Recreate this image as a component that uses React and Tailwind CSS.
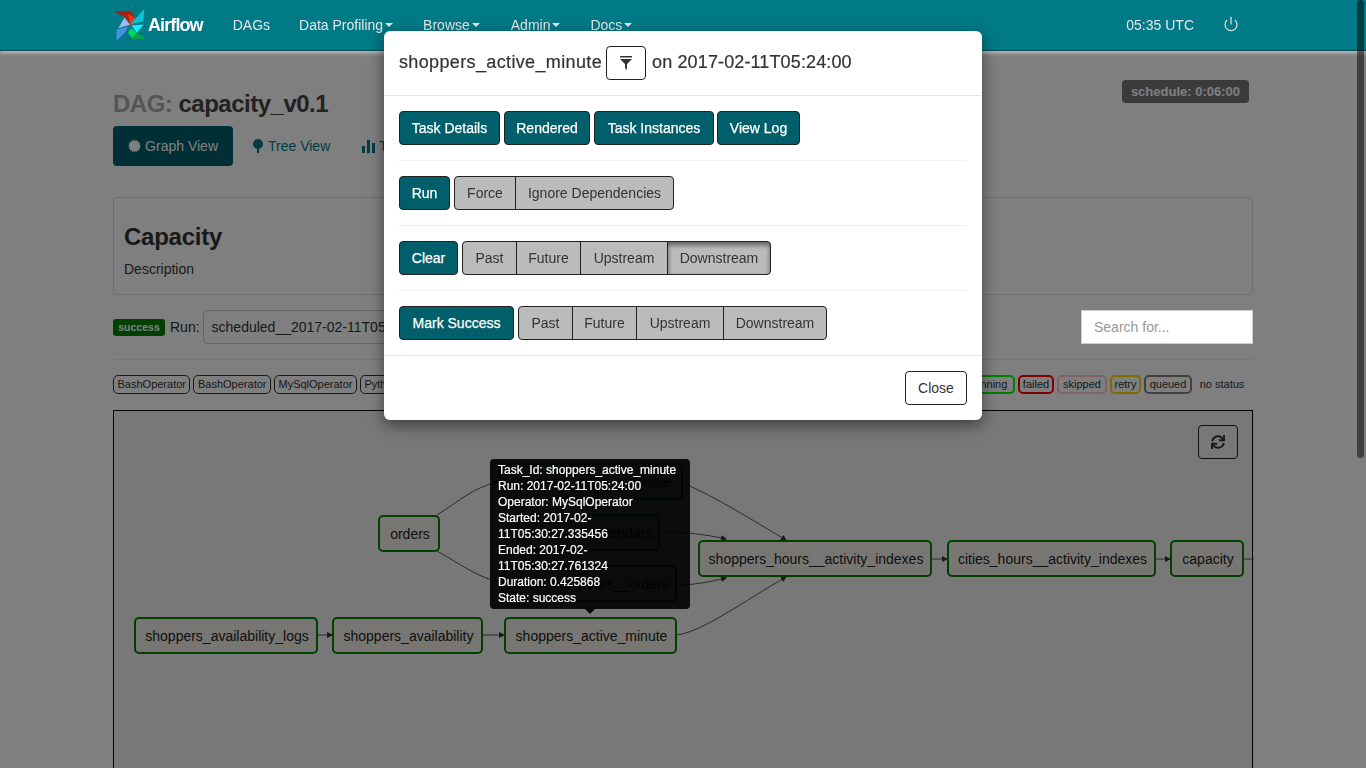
import React from 'react';
import { FaSync } from 'react-icons/fa';
import { Power } from 'lucide-react';

const Caret = () => (
  <span className="inline-block w-0 h-0 ml-[2px] align-middle border-x-[4px] border-x-transparent border-t-[4px] border-t-[#e6e6e6]"></span>
);

// pinwheel logo
const Logo = () => (
  <svg viewBox="340 28 100 97" className="w-[33px] h-[32px]">
    <polygon points="342,35 392,33 410,58 392,76 375,52" fill="#a8200d" />
    <polygon points="385,42 415,60 405,74 392,76" fill="#e43921" />
    <polygon points="375,54 392,76 356,86" fill="#9db8f2" />
    <polygon points="351,90 386,82 376,100 350,125" fill="#4a90e2" />
    <polygon points="435,28 394,73 432,66" fill="#00c7d4" />
    <polygon points="396,78 433,75 412,100" fill="#11f0ff" />
    <polygon points="394,86 412,100 400,118 385,100" fill="#04d659" />
    <polygon points="410,100 440,118 398,119" fill="#00a84a" />
  </svg>
);

// sunburst, glyphicon-certificate
const certPoints = Array.from({ length: 32 }, (_, i) => {
  const r = i % 2 === 0 ? 7 : 5.4;
  const a = (i / 32) * Math.PI * 2;
  return `${(7 + r * Math.cos(a)).toFixed(2)},${(7 + r * Math.sin(a)).toFixed(2)}`;
}).join(' ');

const navLinks = [
  { label: 'DAGs', className: 'ml-[30px]' },
  { label: 'Data Profiling', caret: true, className: 'ml-[29px]' },
  { label: 'Browse', caret: true, className: 'ml-[30px]' },
  { label: 'Admin', caret: true, className: 'ml-[31px]' },
  { label: 'Docs', caret: true, className: 'ml-[30px]' },
];

const operators = ['BashOperator', 'BashOperator', 'MySqlOperator', 'PythonOperator'];

const states = [
  { label: 'success', className: 'w-[52px] border-[#008000]' },
  { label: 'running', className: 'w-[52px] border-[#00ff00]' },
  { label: 'failed', className: 'w-[36px] border-[#ff0000]' },
  { label: 'skipped', className: 'w-[50px] border-[#ffc0cb]' },
  { label: 'retry', className: 'w-[31px] border-[#ffd700]' },
  { label: 'queued', className: 'w-[48px] border-[#808080]' },
  { label: 'no status', className: 'w-[54px] -mr-[4px] border-transparent' },
];

const nodes = [
  { label: 'orders', className: 'left-[264px] top-[104px] w-[62px]' },
  { label: 'shoppers_hours__minute', className: 'left-[384px] top-[52px] w-[185px]' },
  { label: 'shoppers_calendars', className: 'left-[403px] top-[103px] w-[143px]' },
  { label: 'shoppers_hours__orders', className: 'left-[389px] top-[154px] w-[174px]' },
  { label: 'shoppers_hours__activity_indexes', className: 'left-[584px] top-[129px] w-[234px]' },
  { label: 'cities_hours__activity_indexes', className: 'left-[833px] top-[129px] w-[209px]' },
  { label: 'capacity', className: 'left-[1056px] top-[129px] w-[74px]' },
  { label: 'shoppers_availability_logs', className: 'left-[20px] top-[206px] w-[184px]' },
  { label: 'shoppers_availability', className: 'left-[218px] top-[206px] w-[151px]' },
  { label: 'shoppers_active_minute', className: 'left-[390px] top-[206px] w-[173px]' },
];

const edges = [
  'M204 224 L218 224',
  'M369 224 L390 224',
  'M323 104 C345 90 360 76 384 71',
  'M323 140 C345 152 365 168 390 172',
  'M569 72 C600 85 640 110 672 129',
  'M546 121 C570 121 590 123 612 128',
  'M563 174 C580 174 595 171 612 167',
  'M563 224 C590 220 630 190 672 166',
  'M818 148 L833 148',
  'M1042 148 L1056 148',
];

const tooltipLines = [
  'Task_Id: shoppers_active_minute',
  'Run: 2017-02-11T05:24:00',
  'Operator: MySqlOperator',
  'Started: 2017-02-',
  '11T05:30:27.335456',
  'Ended: 2017-02-',
  '11T05:30:27.761324',
  'Duration: 0.425868',
  'State: success',
];

const TealButton = ({ children, className = '' }) => (
  <button className={`h-[34px] bg-[#005f6b] border border-[#222] rounded-[4px] text-white text-[14px] whitespace-nowrap [-webkit-text-stroke:0.25px_white] ${className}`}>
    {children}
  </button>
);

const GroupButtons = ({ items }) => (
  <div className="flex h-[34px] border border-[#222] rounded-[4px] overflow-hidden bg-[#bbbbbb]">
    {items.map((item, i) => (
      <div
        key={item.label}
        className={`flex items-center justify-center text-[14px] text-[#333] whitespace-nowrap ${item.width} ${i > 0 ? 'border-l border-[#222]' : ''} ${item.active ? 'shadow-[inset_0_3px_5px_rgba(0,0,0,0.5)]' : ''}`}
      >
        {item.label}
      </div>
    ))}
  </div>
);

const App = () => {
  return (
    <div className="relative h-screen overflow-hidden bg-white font-['Liberation_Sans',Arial,sans-serif] text-[14px] text-[#333]">
      {/* top bar */}
      <nav className="relative z-50 h-[51px] bg-[#007a87] border-b border-[#004a55] shadow-[0_2px_4px_rgba(255,255,255,0.5)]">
        <div className="w-[1140px] mx-auto flex items-center h-[50px] text-[#e6e6e6]">
          <Logo />
          <span className="ml-[2px] text-[18px] font-bold tracking-[-0.9px] text-white">Airflow</span>
          {navLinks.map((link) => (
            <a key={link.label} className={`${link.className} flex items-center whitespace-nowrap`}>
              {link.label}
              {link.caret && <Caret />}
            </a>
          ))}
          <span className="ml-auto">05:35 UTC</span>
          <Power size={16} strokeWidth={1.8} className="ml-[29px] mr-[14px] -mt-[3px]" />
        </div>
      </nav>

      <main className="w-[1140px] mx-auto">
        <div className="flex justify-between items-start h-[75px] pt-[29px]">
          <h4 className="text-[24px] leading-[48px] font-bold tracking-[-0.5px] text-[#444]">
            <span className="text-[#aaa]">DAG:</span> capacity_v0.1
          </h4>
          <span className="mr-[4px] h-[23px] px-[9px] flex items-center rounded-[4px] bg-[#777] text-white text-[13px] font-bold">
            schedule: 0:06:00
          </span>
        </div>

        <div className="flex items-center h-[40px] text-[#007a87] whitespace-nowrap">
          <a className="flex items-center h-[40px] w-[120px] px-[15px] rounded-[4px] bg-[#005f6b] text-white">
            <svg viewBox="0 0 14 14" className="w-[14px] h-[14px] mr-[4px] fill-current">
              <polygon points={certPoints} />
            </svg>
            Graph View
          </a>
          <a className="flex items-center h-[40px] ml-[4px] px-[15px]">
            <svg viewBox="0 0 12 14" className="w-[12px] h-[14px] mr-[4px] fill-current">
              <circle cx="6" cy="5" r="5" />
              <rect x="5" y="8" width="2" height="6" />
            </svg>
            Tree View
          </a>
          <a className="flex items-center h-[40px] ml-[2px] px-[15px]">
            <svg viewBox="0 0 13 14" className="w-[13px] h-[14px] mr-[4px] fill-current">
              <rect x="0" y="7" width="3" height="7" />
              <rect x="5" y="1" width="3" height="13" />
              <rect x="10" y="4" width="3" height="10" />
            </svg>
            Task Duration
          </a>
        </div>

        <section className="mt-[31px] h-[98px] border border-[#ddd] rounded-[4px] px-[10px]">
          <h2 className="mt-[24px] text-[24px] leading-[30px] font-bold tracking-[-0.25px]">Capacity</h2>
          <p className="mt-[7px] leading-[20px]">Description</p>
        </section>

        <div className="flex items-center mt-[15px] h-[34px]">
          <span className="w-[52px] h-[17px] mt-[1px] flex items-center justify-center rounded-[3px] bg-[#008000] text-white text-[10.5px] font-bold">success</span>
          <span className="ml-[5px]">Run:</span>
          <div className="ml-[3px] w-[330px] h-[34px] px-[8px] flex items-center border border-[#ccc] rounded-[4px] whitespace-nowrap">
            scheduled__2017-02-11T05:24:00
          </div>
          <div className="relative z-50 ml-auto w-[172px] h-[34px] px-[12px] flex items-center bg-white border border-[#ccc] text-[#999]">
            Search for...
          </div>
        </div>

        <div className="mt-[15px] border-t border-[#eee]"></div>

        <div className="flex justify-between mt-[15px] h-[20px] text-[11px]">
          <div className="flex gap-[3px]">
            {operators.map((op, i) => (
              <span key={i} className="h-[19px] px-[3.5px] flex items-center border border-[#333] rounded-[5px]">{op}</span>
            ))}
          </div>
          <div className="flex gap-[3px] mr-[8px]">
            {states.map((s) => (
              <span
                key={s.label}
                className={`h-[19px] flex items-center justify-center whitespace-nowrap border-2 rounded-[5px] ${s.className}`}
              >
                {s.label}
              </span>
            ))}
          </div>
        </div>

        <div className="relative mt-[15px] h-[600px] border border-black bg-[#f0f0f0]">
          <button className="absolute left-[1084px] top-[14px] w-[40px] h-[34px] flex items-center justify-center border border-[#222] rounded-[4px]">
            <FaSync size={14} />
          </button>
          <svg className="absolute left-0 top-0 w-[1140px] h-[300px]" fill="none" stroke="#555" strokeWidth="1">
            <defs>
              <marker id="arrow" markerWidth="6" markerHeight="6" refX="5" refY="3" orient="auto">
                <path d="M0 0 L6 3 L0 6 Z" fill="#333" stroke="none" />
              </marker>
            </defs>
            {edges.map((d) => (
              <path key={d} d={d} markerEnd="url(#arrow)" />
            ))}
            <path d="M1130 148 L1140 148" />
          </svg>
          {nodes.map((node) => (
            <div
              key={node.label}
              className={`absolute h-[37px] pt-[2px] pl-[2px] flex items-center justify-center border-2 border-[#008000] rounded-[5px] bg-[#f0ede4] text-[#222] whitespace-nowrap ${node.className}`}
            >
              {node.label}
            </div>
          ))}

          {/* hover tooltip for the selected task */}
          <div className="absolute z-50 left-[376px] top-[48px] w-[200px] h-[150px] px-[8px] py-[3px] rounded-[4px] bg-black/90 text-white text-[12px] leading-[16px] [-webkit-text-stroke:0.2px_white]">
            {tooltipLines.map((line) => (
              <div key={line}>{line}</div>
            ))}
            <span className="absolute left-[95px] top-[150px] w-0 h-0 border-x-[5px] border-x-transparent border-t-[5px] border-t-black/90"></span>
          </div>
        </div>
      </main>

      {/* backdrop */}
      <div className="fixed inset-0 z-40 bg-black/50"></div>

      {/* task instance modal */}
      <div className="absolute z-50 left-[384px] top-[31px] w-[598px] h-[389px] bg-white rounded-[6px] shadow-[0_5px_15px_rgba(0,0,0,0.5)]">
        <header className="h-[65px] px-[15px] pb-[2px] flex items-center border-b border-[#e5e5e5] text-[18px] [-webkit-text-stroke:0.2px_#333]">
          <span className="tracking-[0.36px]">shoppers_active_minute</span>
          <button className="ml-[4px] mr-[6px] mt-[2px] w-[40px] h-[34px] flex items-center justify-center bg-white border border-[#222] rounded-[4px]">
            <svg viewBox="0 0 12 14" className="w-[12px] h-[14px] fill-[#333]">
              <rect x="0" y="0" width="12" height="1.5" />
              <polygon points="0,3 12,3 7,8 7,14 5,12 5,8" />
            </svg>
          </button>
          <span className="tracking-[0.13px]">on 2017-02-11T05:24:00</span>
        </header>

        <div className="px-[15px] pt-[15px]">
          <div className="flex">
            <TealButton className="w-[101px]">Task Details</TealButton>
            <TealButton className="w-[86px] ml-[4px]">Rendered</TealButton>
            <TealButton className="w-[120px] ml-[4px]">Task Instances</TealButton>
            <TealButton className="w-[83px] ml-[3px]">View Log</TealButton>
          </div>
          <hr className="my-[15px] border-[#eee]" />
          <div className="flex gap-[4px]">
            <TealButton className="w-[51px]">Run</TealButton>
            <GroupButtons items={[{ label: 'Force', width: 'w-[60px]' }, { label: 'Ignore Dependencies', width: 'w-[158px]' }]} />
          </div>
          <hr className="my-[15px] border-[#eee]" />
          <div className="flex gap-[4px]">
            <TealButton className="w-[59px]">Clear</TealButton>
            <GroupButtons
              items={[
                { label: 'Past', width: 'w-[53px]' },
                { label: 'Future', width: 'w-[64px]' },
                { label: 'Upstream', width: 'w-[87px]' },
                { label: 'Downstream', width: 'w-[103px]', active: true },
              ]}
            />
          </div>
          <hr className="my-[15px] border-[#eee]" />
          <div className="flex gap-[4px]">
            <TealButton className="w-[115px]">Mark Success</TealButton>
            <GroupButtons
              items={[
                { label: 'Past', width: 'w-[53px]' },
                { label: 'Future', width: 'w-[64px]' },
                { label: 'Upstream', width: 'w-[87px]' },
                { label: 'Downstream', width: 'w-[103px]' },
              ]}
            />
          </div>
        </div>

        <footer className="mt-[15px] h-[65px] px-[15px] flex items-center justify-end border-t border-[#e5e5e5]">
          <button className="w-[62px] h-[34px] bg-white border border-[#222] rounded-[4px]">Close</button>
        </footer>
      </div>

      {/* overlay scrollbar */}
      <div className="absolute z-50 right-[2px] top-0 w-[7px] h-[458px] rounded-full bg-black/50"></div>
    </div>
  );
};

export default App;
